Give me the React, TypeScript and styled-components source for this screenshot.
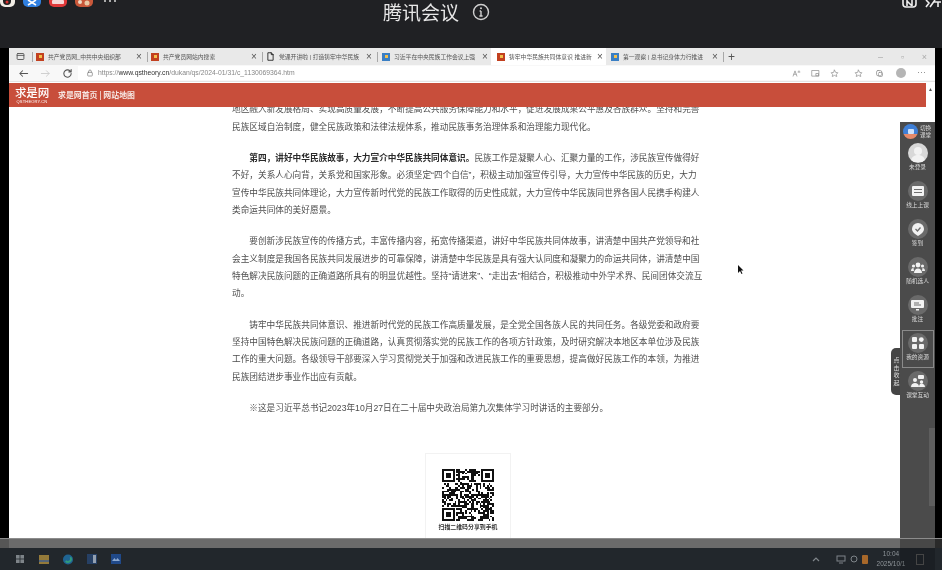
import React from "react";
import styled, { createGlobalStyle } from "styled-components";

const Global = createGlobalStyle`
  html, body { margin: 0; padding: 0; background: #000; }
  body { font-family: "Liberation Sans", "Noto Sans CJK SC", sans-serif; }
`;

const Stage = styled.div`
  width: 942px; height: 570px; display: flex; flex-direction: column; overflow: hidden;
  position: relative; background: #000; filter: blur(0.6px);
`;

const TopBar = styled.header`
  height: 48px; flex: none; display: flex; background: #202124; color: #e6e6e6;
`;
const TopApps = styled.div`
  width: 383px; flex: none; display: flex; align-items: flex-start; gap: 8px;
`;
const AppTile = styled.div<{ $bg: string; $w?: number }>`
  width: ${p => p.$w ?? 18}px; height: 7px; background: ${p => p.$bg}; border-radius: 0 0 5px 5px;
  overflow: hidden; display: flex; justify-content: center;
`;
const AppDots = styled.div`
  display: flex; gap: 3px; margin-left: 3px;
`;
const AppDot = styled.div`
  width: 2px; height: 2px; background: #aaa;
`;
const MeetingTitle = styled.h1`
  margin: 0; font-size: 19px; line-height: 23px; font-weight: 400; color: #e8e8e8;
  font-family: "Noto Sans CJK SC", sans-serif;
`;
const InfoWrap = styled.div`
  margin: 3px 0 0 13px; width: 18px; height: 18px; color: #d0d0d0;
`;
const TopRight = styled.div`
  margin-left: auto; display: flex; gap: 8px; align-items: flex-start;
`;

const Middle = styled.div`
  height: 490px; flex: none; display: flex; position: relative;
`;
const Edge = styled.div<{ $w: number }>`
  width: ${p => p.$w}px; flex: none; background: #000;
`;
const Browser = styled.main`
  flex: 1; min-width: 0; display: flex; flex-direction: column; position: relative; background: #fff;
`;
const TabStrip = styled.div`
  height: 17px; flex: none; display: flex; align-items: center; background: #e9e9e9; position: relative;
`;
const WinSquare = styled.div`
  width: 23px; flex: none; display: flex; justify-content: center; color: #555;
`;
const Tab = styled.div<{ $active?: boolean; $w: number; $pl: number; $pr: number }>`
  width: ${p => p.$w}px; flex: none; height: 17px; display: flex; align-items: center;
  padding: 0 ${p => p.$pr}px 0 ${p => p.$pl}px;
  box-sizing: border-box; gap: 4px;
  background: ${p => (p.$active ? "#fff" : "transparent")};
`;
const TabSep = styled.div`
  width: 1px; height: 10px; flex: none; background: #a8a8a8;
`;
const Favicon = styled.div<{ $bg: string }>`
  width: 8px; height: 8px; flex: none; background: ${p => p.$bg};
  display: flex; align-items: center; justify-content: center;
`;
const FavMark = styled.div`
  width: 3px; height: 3px; background: #f3c04c;
`;
const TabLabel = styled.span`
  flex: 1; min-width: 0; font-size: 5.8px; line-height: 8px; color: #555; white-space: nowrap; overflow: hidden;
`;
const TabClose = styled.span`
  flex: none; font-size: 10px; line-height: 8px; color: #555; width: 8px; text-align: center;
`;
const PlusMark = styled.span`
  flex: none; font-size: 12px; line-height: 12px; color: #555; margin-left: 4px; font-weight: 300;
`;
const WinControls = styled.div`
  margin-left: auto; display: flex; align-items: center; gap: 15px; padding-right: 7px; color: #aaa;
  font-size: 9px; line-height: 10px;
`;
const WinSmall = styled.span`
  width: 7px; text-align: center; display: block;
`;

const AddressBar = styled.div`
  height: 17px; flex: none; display: flex; align-items: center; background: #f8f8f8;
  border-bottom: 1px solid #e4e4e4; box-sizing: border-box;
`;
const NavButtons = styled.div`
  width: 69px; flex: none; display: flex; align-items: center; padding-left: 9px; gap: 11px; box-sizing: border-box;
`;
const UrlField = styled.div`
  flex: 1; height: 14px; background: #fff; display: flex; align-items: center; gap: 4px; padding-left: 8px; color: #777;
`;
const UrlText = styled.span`
  font-size: 6.8px; line-height: 10px; color: #888; white-space: nowrap; b { font-weight: 400; color: #333; }
`;
const ToolIcons = styled.div`
  display: flex; align-items: center; gap: 15px; margin-left: auto; padding-right: 9px; color: #888;
  height: 14px;
`;
const ToolGroup = styled.div<{ $gap: number }>`
  display: flex; align-items: center; gap: ${p => p.$gap}px;
`;
const ToolAvatar = styled.div`
  width: 10px; height: 10px; border-radius: 50%; background: #b5b5b5;
`;
const ToolMore = styled.span`
  font-size: 7px; line-height: 8px; color: #666; letter-spacing: 0.5px;
`;

const PageArea = styled.div`
  flex: 1; min-height: 0; display: flex; padding-top: 1px; background: #fff;
`;
const PageMain = styled.div`
  flex: 1; min-width: 0; display: flex; flex-direction: column;
`;
const SiteHeader = styled.div`
  height: 24px; flex: none; background: #c84e3b; display: flex; align-items: center; color: #fff;
  padding-left: 6px; gap: 9px;
`;
const LogoBlock = styled.div`
  width: 34px; display: flex; flex-direction: column; align-items: center; color: #fff;
`;
const LogoCn = styled.div`
  font-size: 11.5px; line-height: 13px; font-weight: 500; font-family: "Noto Sans CJK SC", sans-serif; letter-spacing: -0.2px;
`;
const LogoEn = styled.div`
  font-size: 4px; line-height: 5px; letter-spacing: 0.2px;
`;
const SiteLinks = styled.div`
  font-size: 7.9px; line-height: 10px; font-weight: 700; font-family: "Noto Sans CJK SC", sans-serif; color: #f6e6e2;
`;
const ScrollCol = styled.div`
  width: 9px; flex: none; display: flex; justify-content: center; padding-top: 3px; color: #555;
  font-size: 5px; line-height: 6px;
`;
const Article = styled.article`
  flex: 1; min-height: 0; overflow: hidden; padding-left: 223px; color: #4e4e4e;
`;
const Para = styled.p`
  margin: 0 0 14px; font-size: 8.67px; line-height: 17.33px; width: 490px;
  &:first-child { margin-top: -5.6px; }
`;
const ParaLine = styled.span<{ $indent?: boolean }>`
  display: block; white-space: nowrap; padding-left: ${p => (p.$indent ? "17.3px" : 0)};
  strong { color: #2a2a2a; font-weight: 700; }
`;
const QrCard = styled.div`
  width: 86px; height: 92px; margin: 36px 0 0 193px; box-sizing: border-box; border: 1px solid #f2f2f2;
  display: flex; flex-direction: column; align-items: center; padding-top: 15px;
`;
const QrCaption = styled.div`
  font-size: 5.9px; line-height: 8px; margin-top: 2px; color: #333; font-weight: 700; white-space: nowrap;
`;
const Cursor = styled.svg`
  position: absolute; left: 728px; top: 217px;
`;

const Sidebar = styled.aside`
  position: absolute; right: 0; top: 74px; bottom: 0; width: 35px; background: #4b4b4b;
  display: flex; flex-direction: column; align-items: center; color: #e8e8e8;
`;
const SwitchRow = styled.div`
  height: 17px; width: 100%; display: flex; align-items: center; padding: 0 0 0 3px; gap: 1px; box-sizing: border-box;
  margin-top: 1px; margin-bottom: 1px;
`;
const SwitchIcon = styled.div`
  width: 15px; height: 15px; border-radius: 50%; background: linear-gradient(#3f7fd6 65%, #e58a6a 65%);
  display: flex; align-items: center; justify-content: center; flex: none;
`;
const SwitchText = styled.div`
  font-size: 5.6px; line-height: 7px; color: #ddd; width: 13px; text-align: center;
`;
const ToolItem = styled.div<{ $selected?: boolean }>`
  width: 30px; height: 36px; margin-bottom: 2px; box-sizing: border-box; display: flex; flex-direction: column;
  align-items: center; padding-top: 2px; gap: 0;
  outline: ${p => (p.$selected ? "1px solid #8a8a8a" : "none")};
`;
const ToolDisc = styled.div<{ $light?: boolean }>`
  width: 20px; height: 20px; border-radius: 50%; background: ${p => (p.$light ? "#d8d8d8" : "#6a6a6a")};
  display: flex; align-items: center; justify-content: center; overflow: hidden; flex: none;
`;
const ToolLabel = styled.div`
  font-size: 5.7px; line-height: 9px; color: #dcdcdc; white-space: nowrap;
`;
const ScrollThumb = styled.div`
  position: absolute; right: 0; top: 306px; width: 6px; height: 78px; background: #5e5e5e;
`;
const Collapse = styled.div`
  position: absolute; left: -9px; top: 226px; width: 9px; height: 47px; background: #454545;
  border-radius: 5px 0 0 5px; display: flex; align-items: center; justify-content: center;
`;
const CollapseText = styled.div`
  writing-mode: vertical-rl; text-orientation: upright; font-size: 6px; line-height: 7px; letter-spacing: 1.5px; color: #ddd;
  white-space: nowrap;
`;

const Band = styled.div`
  height: 10px; flex: none; display: flex; border-top: 1px solid #8c8c8c; box-sizing: border-box;
`;
const BandPart = styled.div<{ $w?: number; $bg: string }>`
  ${p => (p.$w ? `width: ${p.$w}px; flex: none;` : "flex: 1;")} background: ${p => p.$bg};
`;
const Taskbar = styled.footer`
  height: 22px; flex: none; background: #22272c; display: flex; align-items: center; position: relative;
`;
const TaskApps = styled.div`
  display: flex; align-items: center; gap: 14px; padding-left: 15px; opacity: 0.85;
`;
const TaskSlot = styled.div`
  width: 10px; height: 10px; display: flex; align-items: center; justify-content: center;
`;
const Tray = styled.div`
  margin-left: auto; display: flex; align-items: center; color: #8a8f94; gap: 4px; padding-right: 18px;
`;
const TrayChevron = styled.div`
  display: flex; margin-right: 12px;
`;
const TrayTime = styled.div`
  font-size: 6.5px; line-height: 10px; text-align: center; color: #8e9499; width: 30px; margin-left: 4px; margin-right: 6px; white-space: nowrap;
`;
const TrayBox = styled.div`
  width: 6px; height: 9px; border: 1px solid #555;
`;
const TrayChip = styled.div`
  width: 6px; height: 9px; background: #a8682a; border-radius: 1px;
`;
const TrayDim = styled.div`
  position: absolute; right: 7px; top: 0; bottom: 0; width: 35px; background: rgba(0,0,0,.18);
`;

/* QR pattern: deterministic pseudo-random modules with three finder squares */
const QR_N = 29;
function inFinder(x: number, y: number) {
  const f = (a: number, b: number) => x >= a && x < a + 8 && y >= b && y < b + 8;
  return f(0, 0) || f(QR_N - 8, 0) || f(0, QR_N - 8);
}
function qrCells() {
  const out: React.ReactElement[] = [];
  let s = 73;
  for (let y = 0; y < QR_N; y++) for (let x = 0; x < QR_N; x++) {
    s = (s * 1103515245 + 12345) & 0x7fffffff;
    if (!inFinder(x, y) && (s >> 16) % 100 < 52) out.push(<rect key={`${x}-${y}`} x={x} y={y} width={1} height={1} />);
  }
  return out;
}
const Finder = ({ x, y }: { x: number; y: number }) => (
  <g>
    <rect x={x} y={y} width={7} height={7} />
    <rect x={x + 1} y={y + 1} width={5} height={5} fill="#fff" />
    <rect x={x + 2} y={y + 2} width={3} height={3} />
  </g>
);
const QrCode = () => (
  <svg width={52} height={52} viewBox={`0 0 ${QR_N} ${QR_N}`} fill="#111" shapeRendering="crispEdges">
    {qrCells()}
    <Finder x={0} y={0} />
    <Finder x={QR_N - 7} y={0} />
    <Finder x={0} y={QR_N - 7} />
  </svg>
);

const Ico = ({ s = 12, children, sw = 1.6, fill = "none" }: { s?: number; children: React.ReactNode; sw?: number; fill?: string }) => (
  <svg width={s} height={s} viewBox="0 0 24 24" fill={fill} stroke={fill === "none" ? "currentColor" : "none"} strokeWidth={sw} strokeLinecap="round" strokeLinejoin="round">
    {children}
  </svg>
);

const W = "#f2f2f2";
const tabs = [
  { w: 114, pl: 3, pr: 4, t: "共产党员网_中共中央组织部", c: "#c2401f", kind: "red", sep: true },
  { w: 114, pl: 3, pr: 4, t: "共产党员网站内搜索", c: "#c2401f", kind: "red", sep: true },
  { w: 114, pl: 3, pr: 4, t: "党课开讲啦 | 打造铸牢中华民族", c: "", kind: "doc", sep: true },
  { w: 113, pl: 4, pr: 2, t: "习近平在中央民族工作会议上强", c: "#3a7fc4", kind: "blue", sep: false },
  { w: 115, pl: 6, pr: 2, t: "铸牢中华民族共同体意识 推进新", c: "#c2401f", kind: "red", active: true, sep: false },
  { w: 117, pl: 5, pr: 4, t: "第一观察 | 总书记身体力行推进", c: "#3a7fc4", kind: "blue", sep: true },
];

const paragraphs: { lines: React.ReactNode[] }[] = [
  { lines: [
    "地区融入新发展格局、实现高质量发展，不断提高公共服务保障能力和水平，促进发展成果公平惠及各族群众。坚持和完善",
    "民族区域自治制度，健全民族政策和法律法规体系，推动民族事务治理体系和治理能力现代化。",
  ] },
  { lines: [
    <><strong>第四，讲好中华民族故事，大力宣介中华民族共同体意识。</strong>民族工作是凝聚人心、汇聚力量的工作，涉民族宣传做得好</>,
    "不好，关系人心向背，关系党和国家形象。必须坚定“四个自信”，积极主动加强宣传引导，大力宣传中华民族的历史，大力",
    "宣传中华民族共同体理论，大力宣传新时代党的民族工作取得的历史性成就，大力宣传中华民族同世界各国人民携手构建人",
    "类命运共同体的美好愿景。",
  ] },
  { lines: [
    "要创新涉民族宣传的传播方式，丰富传播内容，拓宽传播渠道，讲好中华民族共同体故事，讲清楚中国共产党领导和社",
    "会主义制度是我国各民族共同发展进步的可靠保障，讲清楚中华民族是具有强大认同度和凝聚力的命运共同体，讲清楚中国",
    "特色解决民族问题的正确道路所具有的明显优越性。坚持“请进来”、“走出去”相结合，积极推动中外学术界、民间团体交流互",
    "动。",
  ] },
  { lines: [
    "铸牢中华民族共同体意识、推进新时代党的民族工作高质量发展，是全党全国各族人民的共同任务。各级党委和政府要",
    "坚持中国特色解决民族问题的正确道路，认真贯彻落实党的民族工作的各项方针政策，及时研究解决本地区本单位涉及民族",
    "工作的重大问题。各级领导干部要深入学习贯彻党关于加强和改进民族工作的重要思想，提高做好民族工作的本领，为推进",
    "民族团结进步事业作出应有贡献。",
  ] },
  { lines: ["※这是习近平总书记2023年10月27日在二十届中央政治局第九次集体学习时讲话的主要部分。"] },
];
const indented = [false, true, true, true, true];

export default function App() {
  return (
    <Stage>
      <Global />
      <TopBar>
        <TopApps>
          <AppTile $bg="#f2ede6" $w={15}>
            <svg width="15" height="7" viewBox="0 0 15 7"><circle cx="7" cy="1" r="4" fill="#222" /><circle cx="7" cy="2" r="1.5" fill="#d33" /></svg>
          </AppTile>
          <AppTile $bg="#2f7fe0">
            <svg width="18" height="7" viewBox="0 0 18 7"><path d="M5 0l8 5M13 0L5 5" stroke="#fff" strokeWidth="1.6" fill="none" /></svg>
          </AppTile>
          <AppTile $bg="#e0393a">
            <svg width="18" height="7" viewBox="0 0 18 7"><rect x="3" y="0" width="12" height="4" rx="1" fill="#f6d9d9" /></svg>
          </AppTile>
          <AppTile $bg="#c9583a">
            <svg width="18" height="7" viewBox="0 0 18 7"><circle cx="5" cy="2" r="2" fill="#eedcc6" /><circle cx="12" cy="3" r="2.5" fill="#e9c9a5" /></svg>
          </AppTile>
          <AppDots><AppDot /><AppDot /><AppDot /></AppDots>
        </TopApps>
        <MeetingTitle>腾讯会议</MeetingTitle>
        <InfoWrap>
          <svg width="18" height="18" viewBox="0 0 18 18" fill="none" stroke="currentColor">
            <circle cx="9" cy="9" r="7.5" strokeWidth="1.4" />
            <path d="M9 8v5M7.6 8H9M7.4 13h3.2" strokeWidth="1.4" />
            <circle cx="9" cy="5.2" r="1" fill="currentColor" stroke="none" />
          </svg>
        </InfoWrap>
        <TopRight>
          <svg width="15" height="8" viewBox="0 0 15 8" fill="none" stroke="#eee" strokeWidth="1.6">
            <path d="M1 0v4a3 3 0 003 3h7a3 3 0 003-3V0" />
            <path d="M5 0v6M10 0v6M5 1l5 5" />
          </svg>
          <svg width="17" height="8" viewBox="0 0 17 8" fill="none" stroke="#eee" strokeWidth="1.6">
            <path d="M1 0l3 3-3 4M10 0L5 7M9 2h7M13 2v5" />
          </svg>
        </TopRight>
      </TopBar>

      <Middle>
        <Edge $w={9} />
        <Browser>
          <TabStrip>
            <WinSquare>
              <Ico s={9} sw={2.4}><rect x="3" y="4" width="18" height="16" rx="2" /><path d="M3 9h18" /></Ico>
            </WinSquare>
            <TabSep />
            {tabs.map(t => (
              <React.Fragment key={t.t}>
                <Tab $w={t.w} $pl={t.pl} $pr={t.pr} $active={t.active}>
                  {t.kind === "doc" ? (
                    <Ico s={9} sw={2}><path d="M6 2h8l5 5v15H6z" /><path d="M14 2v5h5" /></Ico>
                  ) : (
                    <Favicon $bg={t.c}><FavMark /></Favicon>
                  )}
                  <TabLabel>{t.t}</TabLabel>
                  <TabClose>×</TabClose>
                </Tab>
                {t.sep ? <TabSep /> : null}
              </React.Fragment>
            ))}
            <PlusMark>+</PlusMark>
            <WinControls>
              <WinSmall>–</WinSmall>
              <WinSmall>▫</WinSmall>
              <WinSmall>×</WinSmall>
            </WinControls>
          </TabStrip>
          <AddressBar>
            <NavButtons>
              <Ico s={11} sw={2.2}><path d="M21 12H4M10 6l-6 6 6 6" stroke="#555" /></Ico>
              <Ico s={11} sw={2}><path d="M3 12h17M14 6l6 6-6 6" stroke="#ccc" /></Ico>
              <Ico s={11} sw={2.4}><path d="M20 12a8 8 0 11-2.5-5.8L20 8.5M20 3.5v5h-5" stroke="#555" /></Ico>
            </NavButtons>
            <UrlField>
              <Ico s={8} sw={2}><rect x="5" y="10" width="14" height="11" rx="2" /><path d="M8 10V7a4 4 0 018 0v3" /></Ico>
              <UrlText>https://<b>www.qstheory.cn</b>/dukan/qs/2024-01/31/c_1130069364.htm</UrlText>
              <ToolIcons>
                <ToolGroup $gap={10}>
                  <Ico s={9} sw={1.8}><path d="M3 19l5-14 5 14M5 14h6M16 8h5M18.5 5v3" /></Ico>
                  <Ico s={9} sw={1.8}><rect x="3" y="4" width="18" height="15" /><path d="M14 12h6v6h-6z" /></Ico>
                  <Ico s={9} sw={1.8}><path d="M12 3l3 6 6 1-4 4 1 6-6-3-6 3 1-6-4-4 6-1z" /></Ico>
                </ToolGroup>
                <ToolGroup $gap={12}>
                  <Ico s={9} sw={1.8}><path d="M12 3l3 6 6 1-4 4 1 6-6-3-6 3 1-6-4-4 6-1z" /></Ico>
                  <Ico s={9} sw={1.8}><rect x="4" y="4" width="14" height="14" rx="4" /><rect x="9" y="9" width="11" height="11" rx="3" /></Ico>
                  <ToolAvatar />
                  <ToolMore>···</ToolMore>
                </ToolGroup>
              </ToolIcons>
            </UrlField>
          </AddressBar>
          <PageArea>
            <PageMain>
              <SiteHeader>
                <LogoBlock>
                  <LogoCn>求是网</LogoCn>
                  <LogoEn>QSTHEORY.CN</LogoEn>
                </LogoBlock>
                <SiteLinks>求是网首页 | 网站地图</SiteLinks>
              </SiteHeader>
              <Article>
                {paragraphs.map((p, i) => (
                  <Para key={i}>
                    {p.lines.map((l, j) => (
                      <ParaLine key={j} $indent={indented[i] && j === 0}>{l}</ParaLine>
                    ))}
                  </Para>
                ))}
                <QrCard>
                  <QrCode />
                  <QrCaption>扫描二维码分享到手机</QrCaption>
                </QrCard>
              </Article>
            </PageMain>
            <ScrollCol>▲</ScrollCol>
          </PageArea>

          <Cursor width="7" height="10" viewBox="0 0 7 10"><path d="M1 0v8l2-2 1.5 3 1-.5L4 5.5h2.5z" fill="#111" /></Cursor>

          <Sidebar>
            <ScrollThumb />
            <SwitchRow>
              <SwitchIcon>
                <svg width="8" height="8" viewBox="0 0 8 8"><rect x="1" y="1" width="6" height="5" rx="1" fill="#cfe2fa" /></svg>
              </SwitchIcon>
              <SwitchText>切换课堂</SwitchText>
            </SwitchRow>
            <ToolItem>
              <ToolDisc $light>
                <svg width="20" height="20" viewBox="0 0 20 20" fill={W}><circle cx="10" cy="8" r="4" /><path d="M3 19c0-5 3-7 7-7s7 2 7 7z" /></svg>
              </ToolDisc>
              <ToolLabel>未登录</ToolLabel>
            </ToolItem>
            <ToolItem>
              <ToolDisc>
                <svg width="12" height="10" viewBox="0 0 12 10" fill={W}><rect width="12" height="10" rx="1" /><path d="M2 3.5h8M2 6.5h8" stroke="#6e6e6e" /></svg>
              </ToolDisc>
              <ToolLabel>线上上课</ToolLabel>
            </ToolItem>
            <ToolItem>
              <ToolDisc>
                <svg width="12" height="13" viewBox="0 0 12 13" fill={W}><path d="M6 0a6 6 0 016 6c0 3-3 5-6 7-3-2-6-4-6-7a6 6 0 016-6z" /><path d="M3.5 6l2 2 3-3.5" stroke="#6e6e6e" strokeWidth="1.3" fill="none" /></svg>
              </ToolDisc>
              <ToolLabel>签到</ToolLabel>
            </ToolItem>
            <ToolItem>
              <ToolDisc>
                <svg width="14" height="11" viewBox="0 0 14 11" fill={W}><circle cx="7" cy="3" r="2.4" /><path d="M3 11c0-3 2-4.5 4-4.5s4 1.5 4 4.5z" /><circle cx="2.5" cy="4" r="1.6" /><circle cx="11.5" cy="4" r="1.6" /><path d="M0 9c0-2 1-3 2.5-3l.5 3zM14 9c0-2-1-3-2.5-3l-.5 3z" /></svg>
              </ToolDisc>
              <ToolLabel>随机选人</ToolLabel>
            </ToolItem>
            <ToolItem>
              <ToolDisc>
                <svg width="13" height="11" viewBox="0 0 13 11" fill={W}><rect width="13" height="8" rx="1" /><path d="M8 3H3M10 5H3" stroke="#6e6e6e" /><rect x="5" y="9" width="3" height="1.5" /></svg>
              </ToolDisc>
              <ToolLabel>批注</ToolLabel>
            </ToolItem>
            <ToolItem $selected>
              <ToolDisc>
                <svg width="12" height="12" viewBox="0 0 12 12" fill={W}><rect width="5" height="5" rx="1" /><circle cx="9.3" cy="2.6" r="2.4" /><rect y="7" width="5" height="5" rx="1" /><rect x="7" y="7" width="5" height="5" rx="1" /></svg>
              </ToolDisc>
              <ToolLabel>我的资源</ToolLabel>
            </ToolItem>
            <ToolItem>
              <ToolDisc>
                <svg width="14" height="12" viewBox="0 0 14 12" fill={W}><circle cx="4" cy="5" r="2" /><path d="M0 12c0-3 2-4 4-4s4 1 4 4z" /><rect x="7" y="0" width="6" height="4" rx="1" /><circle cx="10.5" cy="7" r="1.7" /><path d="M8 12c0-2 1-3.5 2.5-3.5S14 10 14 12z" /></svg>
              </ToolDisc>
              <ToolLabel>课堂互动</ToolLabel>
            </ToolItem>
            <Collapse><CollapseText>点击收起</CollapseText></Collapse>
          </Sidebar>
        </Browser>
        <Edge $w={7} />
      </Middle>

      <Band>
        <BandPart $w={9} $bg="#565656" />
        <BandPart $bg="#6b6b6b" />
        <BandPart $w={35} $bg="#474747" />
        <BandPart $w={7} $bg="#2a2a2a" />
      </Band>

      <Taskbar>
        <TaskApps>
          <TaskSlot>
            <svg width="8" height="8" viewBox="0 0 8 8" fill="#8f959a"><rect width="3.6" height="3.6" /><rect x="4.4" width="3.6" height="3.6" /><rect y="4.4" width="3.6" height="3.6" /><rect x="4.4" y="4.4" width="3.6" height="3.6" /></svg>
          </TaskSlot>
          <TaskSlot>
            <svg width="10" height="9" viewBox="0 0 10 9"><rect width="10" height="9" fill="#a8893d" /><rect y="5" width="10" height="2" fill="#5d6f86" /></svg>
          </TaskSlot>
          <TaskSlot>
            <svg width="11" height="11" viewBox="0 0 11 11"><circle cx="5.5" cy="5.5" r="5.5" fill="#1f6fa5" /><path d="M3 7a3 3 0 105-4" stroke="#33b08a" strokeWidth="2" fill="none" /></svg>
          </TaskSlot>
          <TaskSlot>
            <svg width="10" height="10" viewBox="0 0 10 10"><rect width="10" height="10" fill="#27456f" /><rect x="6" y="1" width="3" height="8" fill="#a8b6c8" /></svg>
          </TaskSlot>
          <TaskSlot>
            <svg width="10" height="10" viewBox="0 0 10 10"><rect width="10" height="10" fill="#204f9a" /><path d="M1 7l2.5-3L5 6l1.5-2L9 7z" fill="#9fc0ee" /></svg>
          </TaskSlot>
        </TaskApps>
        <Tray>
          <TrayChevron>
            <svg width="8" height="6" viewBox="0 0 8 6" fill="none" stroke="#80868b" strokeWidth="1.2"><path d="M1 5l3-3 3 3" /></svg>
          </TrayChevron>
          <svg width="10" height="9" viewBox="0 0 10 9" fill="none" stroke="#7e8489"><rect x="1" y="1" width="8" height="5" /><path d="M3 8h4" /></svg>
          <svg width="8" height="8" viewBox="0 0 8 8" fill="none" stroke="#7e8489"><circle cx="4" cy="4" r="3" /></svg>
          <TrayChip />
          <TrayTime>10:04<br />2025/10/1</TrayTime>
          <TrayBox />
        </Tray>
        <TrayDim />
      </Taskbar>
    </Stage>
  );
}
